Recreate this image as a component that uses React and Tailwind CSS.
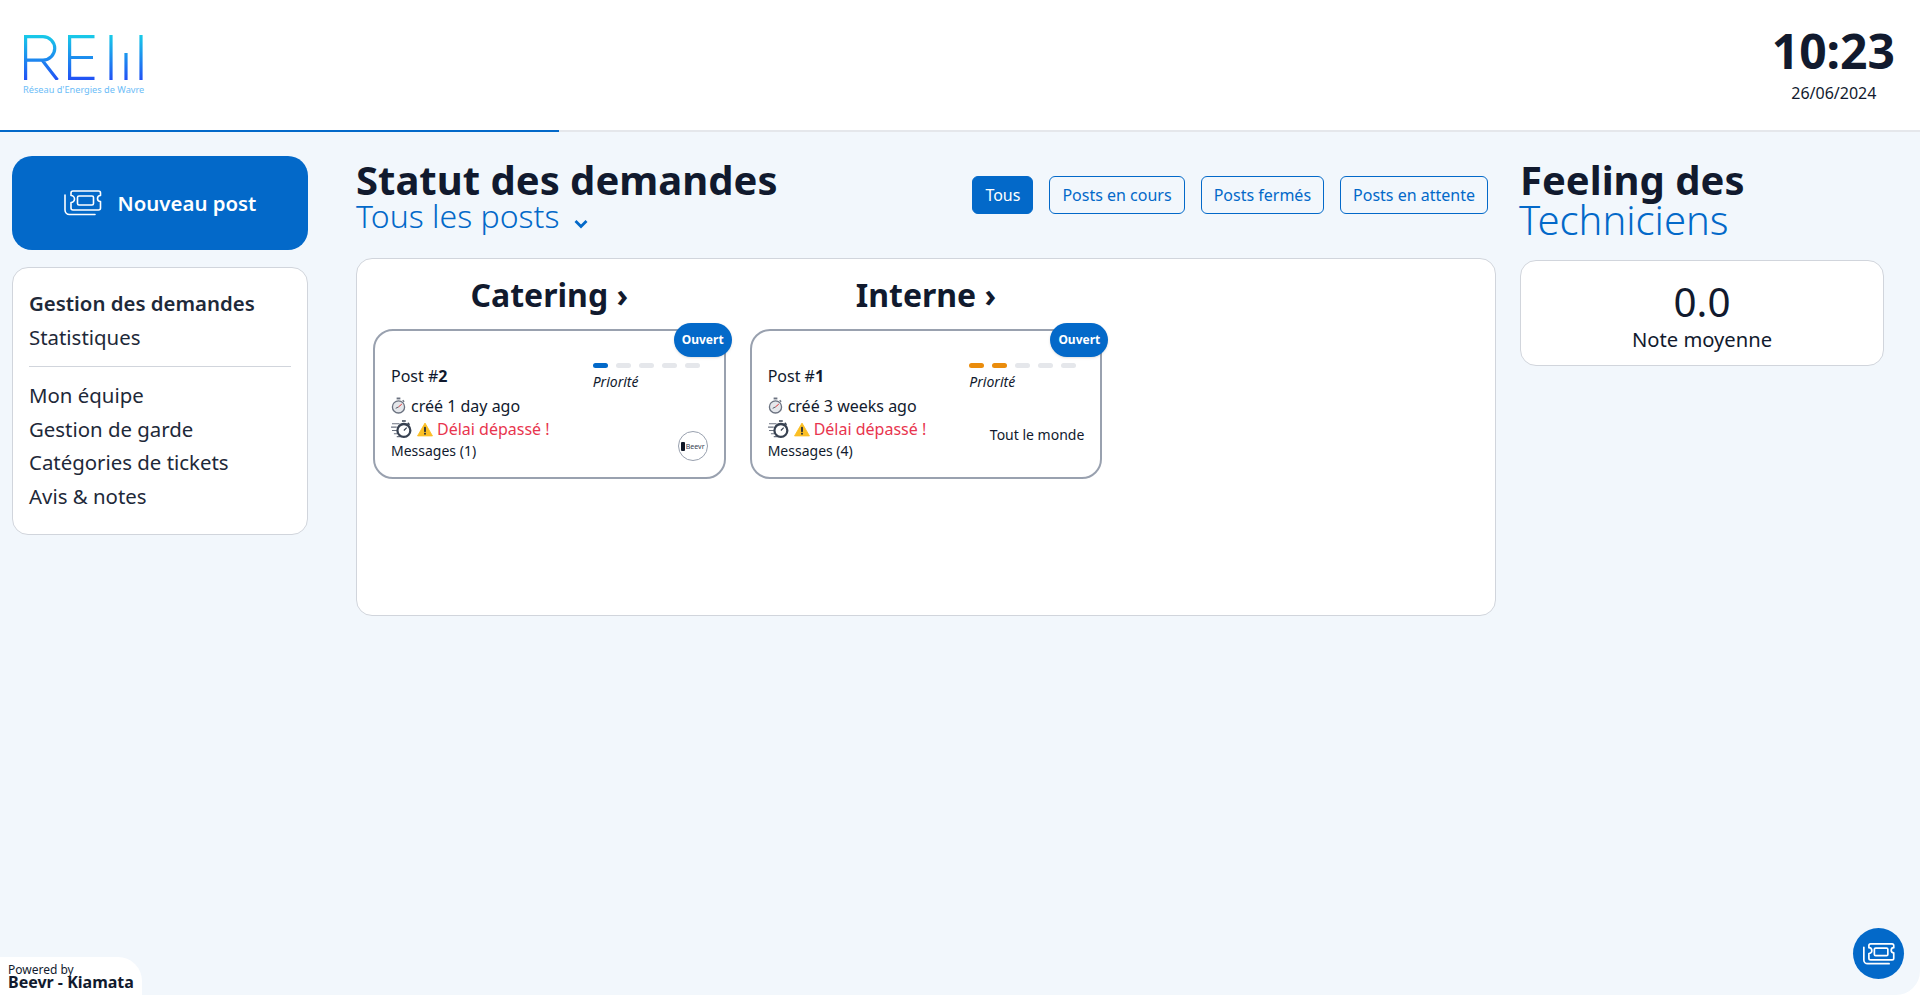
import React from "react";

const Ticket = ({ className, sw = "1.6" }) => (
  <svg viewBox="0 0 38 26" fill="none" stroke="currentColor" strokeWidth={sw} strokeLinecap="round" strokeLinejoin="round" className={className}>
    <path d="M1 5v15a4.500 4.500 0 0 0 4.500 4.500H31" />
    <path d="M9 1h25.500a2 2 0 0 1 2 2v2.500a3 3 0 0 0 0 6V18a2 2 0 0 1-2 2H9a2 2 0 0 1-2-2v-5.500a3.500 3.500 0 0 0 0-7V3a2 2 0 0 1 2-2z" />
    <rect x="13.500" y="6" width="16" height="9" rx="1.500" />
  </svg>
);

const Logo = () => (
  <svg viewBox="0 0 120 45" className="w-[120px] h-[45px]" fill="none" strokeWidth="3.200">
    <defs>
      <linearGradient id="rew" gradientUnits="userSpaceOnUse" x1="0" y1="0" x2="0" y2="45">
        <stop offset="0" stopColor="#18cbe8" />
        <stop offset="1" stopColor="#2150f5" />
      </linearGradient>
    </defs>
    <path d="M1.600 45V1.600H19a11.500 11.500 0 0 1 0 23.500H1.600M18 25 33.500 45" stroke="url(#rew)" />
    <path d="M70.500 1.600H45.600V43.400H70.500M45.600 22.500H69" stroke="url(#rew)" />
    <path d="M87 0V45M102 18V45M117 0V45" stroke="url(#rew)" />
  </svg>
);

const Stopwatch = () => (
  <svg viewBox="0 0 16 18" className="w-[15px] h-[17px] shrink-0">
    <rect x="6" y="0.500" width="4" height="2" fill="#6b7280" />
    <path d="M12.500 3.500l1.500 1.500" stroke="#6b7280" strokeWidth="1.500" />
    <circle cx="8" cy="10.500" r="6.500" fill="#e5e7eb" stroke="#6b7280" strokeWidth="1.400" />
    <path d="M8 10.500 11.500 7.500" stroke="#dc2626" strokeWidth="1" />
    <path d="M8 10.500 5 12" stroke="#4b5563" strokeWidth="1" />
  </svg>
);

const Speed = () => (
  <svg viewBox="0 0 22 20" className="w-[21px] h-[19px] shrink-0" fill="none" stroke="#374151">
    <path d="M1 4h8M0 7.500h6M1 11h5M3 14.500h5M6 17.500h4" strokeWidth="1.100" stroke="#6b7280" />
    <circle cx="13.500" cy="11" r="6.800" strokeWidth="2.400" />
    <path d="M11.500 1h4M17.500 3l2 2" strokeWidth="1.600" />
    <path d="M13.500 11l3-3" strokeWidth="1.300" />
  </svg>
);

const Warning = () => (
  <svg viewBox="0 0 18 16" className="w-[16px] h-[15px] shrink-0">
    <path d="M9 .8 17.400 15.200H.6z" fill="#fbbf24" stroke="#fbbf24" strokeLinejoin="round" />
    <rect x="8" y="5" width="2" height="6" rx="1" fill="#1f2937" />
    <circle cx="9" cy="12.800" r="1.100" fill="#1f2937" />
  </svg>
);

const Chevron = () => (
  <svg viewBox="0 0 14 10" className="w-[14px] h-[10px] ml-[15px] mt-[16px]" fill="none" stroke="#0369c9" strokeWidth="2.800">
    <path d="M1.500 2 7 7.500 12.500 2" />
  </svg>
);

const Card = ({ num, level, color, messages, ago, children }) => (
  <div className="relative border-2 border-gray-400 rounded-[20px] h-[150px] px-4 bg-white">
    <div className="absolute -top-[8px] -right-[8px] h-[34px] w-[58px] rounded-full bg-[#0369c9] text-white text-xs font-bold flex items-center justify-center shadow">
      Ouvert
    </div>
    <div className="flex justify-between">
      <div className="flex-1">
        <div className="mt-[33px] text-base leading-6">
          Post #<b>{num}</b>
        </div>
        <div className="mt-[6px] flex items-center gap-[5px] h-[23px]">
          <Stopwatch />
          <span>créé {ago}</span>
        </div>
        <div className="flex items-center gap-[5px] h-[24px]">
          <Speed />
          <Warning />
          <span className="-ml-[1px] text-[#e8354e]">Délai dépassé !</span>
        </div>
        <div className="text-sm leading-5">Messages ({messages})</div>
      </div>
      <div className="w-[107px] mr-[8px] shrink-0">
        <div className="mt-[32px] flex gap-2">
          {[0, 1, 2, 3, 4].map((i) => (
            <div key={i} className={"w-[15px] h-[5px] rounded-full " + (i < level ? color : "bg-gray-200")} />
          ))}
        </div>
        <div className="text-sm italic leading-5 mt-[4px]">Priorité</div>
      </div>
    </div>
    {children}
  </div>
);

export default function App() {
  return (
    <div className="w-[1920px] h-[995px] bg-white text-[#111a2e] overflow-hidden relative" style={{ fontFamily: '"Noto Sans", sans-serif' }}>
      <header className="h-[132px] bg-white border-b-2 border-gray-200 relative flex items-center justify-between pl-[23px] pr-[25px]">
        <div className="absolute left-0 -bottom-[2px] h-[2px] w-[559px] bg-[#0369c9]" />
        <div className="-mt-[1px]">
          <div className="pl-[1px]">
            <Logo />
          </div>
          <div className="text-[9.200px] leading-none mt-[5px] text-[#6cbdf7] whitespace-nowrap">Réseau d'Energies de Wavre</div>
        </div>
        <div className="text-center">
          <div className="text-5xl font-bold leading-[50px] mt-[1px]">10:23</div>
          <div className="text-base leading-6 mt-[5px] pl-[1px]">26/06/2024</div>
        </div>
      </header>

      <main className="h-[863px] bg-[#f2f7fc] rounded-br-3xl flex pl-3">
        <aside className="w-[296px] shrink-0 pt-6">
          <button className="w-full h-[94px] rounded-[20px] bg-[#0369c9] text-white flex items-center justify-center gap-4 text-[20.400px] font-semibold">
            <Ticket className="w-[38px] h-[26px]" />
            <span className="mt-[1px]">Nouveau post</span>
          </button>
          <nav className="mt-[17px] h-[268px] bg-white border border-gray-300 rounded-2xl px-4 pt-[19px] text-[20.400px] leading-[33.500px] text-gray-800">
            <div className="font-semibold">Gestion des demandes</div>
            <div>Statistiques</div>
            <div className="border-t border-gray-300 mt-[12px] mb-[12px]" />
            <div>Mon équipe</div>
            <div>Gestion de garde</div>
            <div>Catégories de tickets</div>
            <div>Avis &amp; notes</div>
          </nav>
        </aside>

        <section className="w-[1140px] shrink-0 ml-12 pt-6">
          <div className="flex justify-between h-[102px] pr-[8px]">
            <div className="pt-[4px]">
              <h1 className="text-[40px] font-bold leading-[40px] whitespace-nowrap">Statut des demandes</h1>
              <div className="flex items-center text-[32px] font-light text-[#0369c9] leading-[32px]">
                Tous les posts
                <Chevron />
              </div>
            </div>
            <div className="flex gap-4 mt-[20px] h-[38px]">
              <button className="px-3 rounded-md bg-[#0369c9] border border-[#0369c9] text-white text-base">Tous</button>
              <button className="px-3 rounded-md border border-[#0369c9] text-[#0369c9] text-base">Posts en cours</button>
              <button className="px-3 rounded-md border border-[#0369c9] text-[#0369c9] text-base">Posts fermés</button>
              <button className="px-3 rounded-md border border-[#0369c9] text-[#0369c9] text-base">Posts en attente</button>
            </div>
          </div>
          <div className="h-[358px] bg-white border border-gray-300 rounded-2xl p-4 grid grid-cols-3 gap-6 content-start">
            <div>
              <h2 className="text-[32px] font-bold text-center leading-[36px] mt-[2px] mb-[16px]">Catering ›</h2>
              <Card num="2" level={1} color="bg-[#0369c9]" messages="1" ago="1 day ago">
                <div className="absolute right-[16px] bottom-[16px] w-[30px] h-[30px] rounded-full border border-gray-400 flex items-center justify-center gap-[1px] text-[7px] text-gray-700 leading-none">
                  <span className="w-[4px] h-[9px] bg-gray-900 rounded-[1px]" />
                  Beevr
                </div>
              </Card>
            </div>
            <div>
              <h2 className="text-[32px] font-bold text-center leading-[36px] mt-[2px] mb-[16px]">Interne ›</h2>
              <Card num="1" level={2} color="bg-[#ea8c0c]" messages="4" ago="3 weeks ago">
                <div className="absolute right-[16px] top-[94px] text-sm leading-5">Tout le monde</div>
              </Card>
            </div>
          </div>
        </section>

        <section className="w-[364px] shrink-0 ml-6 pt-[28px]">
          <h2 className="text-[40px] font-bold leading-[40px]">Feeling des</h2>
          <div className="text-[40px] font-light text-[#0369c9] leading-[40px] -ml-[1px]">Techniciens</div>
          <div className="mt-[20px] h-[106px] bg-white border border-gray-300 rounded-2xl flex flex-col items-center">
            <div className="text-[40.400px] font-[450] leading-[40px] mt-[21px]">0.0</div>
            <div className="text-[20.200px] font-[450] leading-7 mt-[3px]">Note moyenne</div>
          </div>
        </section>
      </main>

      <div className="absolute left-0 bottom-0 w-[142px] h-[38px] bg-white rounded-tr-3xl pl-2 pt-[6px]">
        <div className="text-xs leading-[14px]">Powered by</div>
        <div className="text-base font-bold leading-[14px] -mt-[2px] whitespace-nowrap">Beevr - Kiamata</div>
      </div>

      <button className="absolute right-4 bottom-4 w-[51px] h-[51px] rounded-full bg-[#0369c9] text-white flex items-center justify-center">
        <Ticket className="w-[32px] h-[22px]" sw="2" />
      </button>
    </div>
  );
}
